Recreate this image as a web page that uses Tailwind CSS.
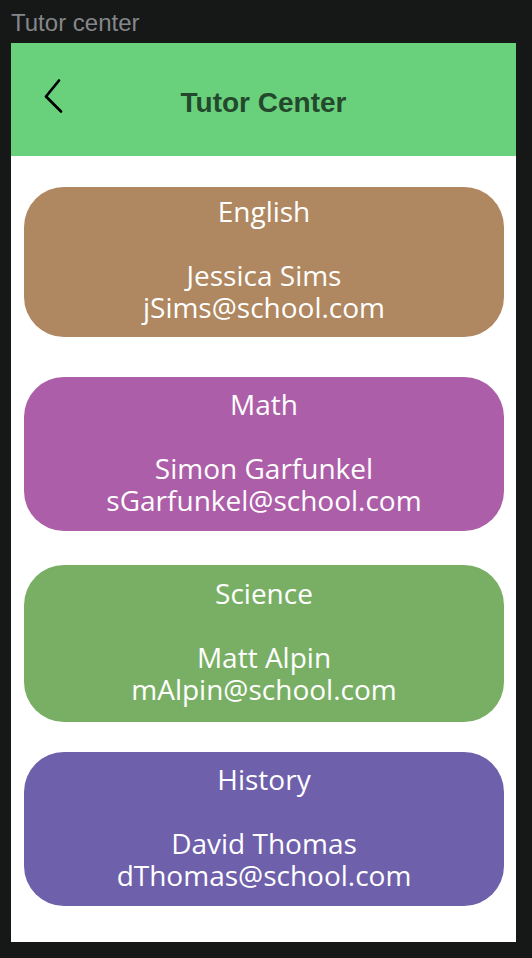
<!DOCTYPE html>
<html lang="en">
<head>
<meta charset="utf-8">
<meta name="viewport" content="width=device-width, initial-scale=1">
<title>Tutor center</title>
<script src="https://cdn.jsdelivr.net/npm/@tailwindcss/browser@4"></script>
</head>
<body class="min-h-screen bg-[#161817] pr-4 pb-4 pl-[11px] font-['Liberation_Sans',sans-serif]">
  <p class="pt-[7px] pb-1 text-[24px] leading-8 text-[#85878a]">Tutor center</p>
  <main class="bg-white pb-9">
    <header class="grid grid-cols-[1fr_auto_1fr] items-center bg-[#69d17c] pt-8 pb-[33px]">
      <button type="button" aria-label="Back" class="ml-7 flex h-12 w-8 items-center pb-2">
        <svg class="h-10 w-8" viewBox="0 0 32 40" fill="none" stroke="#000" stroke-width="2.7" stroke-linecap="round" stroke-linejoin="round" aria-hidden="true"><path d="M20 5.500 7 21.500 22 36.500"/></svg>
      </button>
      <h1 class="pt-2 text-[28px] leading-10 font-bold text-[#24482c]">Tutor Center</h1>
    </header>
    <div class="pt-[31px] pr-3 pl-[13px] text-center font-['Open_Sans',sans-serif] text-[28px] leading-8 text-white">
      <section class="mb-10 rounded-[40px] bg-[#af8760] pt-2 pb-3.5">
        <h2>English</h2>
        <p class="pt-8">Jessica Sims</p>
        <a class="block" href="mailto:jSims@school.com">jSims@school.com</a>
      </section>
      <section class="mb-[34px] rounded-[40px] bg-[#ad5ea8] pt-[11px] pb-[15px]">
        <h2>Math</h2>
        <p class="pt-8">Simon Garfunkel</p>
        <a class="block" href="mailto:sGarfunkel@school.com">sGarfunkel@school.com</a>
      </section>
      <section class="mb-[30px] rounded-[40px] bg-[#79af65] pt-3 pb-[17px]">
        <h2>Science</h2>
        <p class="pt-8">Matt Alpin</p>
        <a class="block" href="mailto:mAlpin@school.com">mAlpin@school.com</a>
      </section>
      <section class="rounded-[40px] bg-[#6e60ab] pt-[11px] pb-[15px]">
        <h2>History</h2>
        <p class="pt-8">David Thomas</p>
        <a class="block" href="mailto:dThomas@school.com">dThomas@school.com</a>
      </section>
    </div>
  </main>
</body>
</html>
